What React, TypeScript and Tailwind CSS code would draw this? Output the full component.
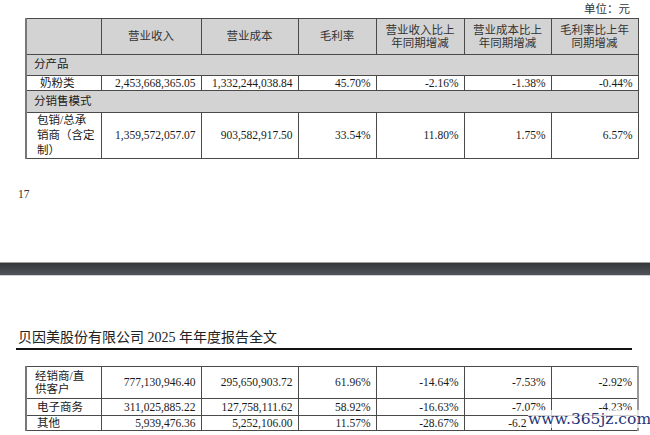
const font = { fontFamily: '"Liberation Serif", "Noto Sans CJK SC", serif' };

const cols = [75, 100, 97, 78, 88, 87, 87];

const Cols = () => (
  <colgroup>
    <col className="w-[75px]" />
    <col className="w-[100px]" />
    <col className="w-[97px]" />
    <col className="w-[78px]" />
    <col className="w-[88px]" />
    <col className="w-[87px]" />
    <col className="w-[87px]" />
  </colgroup>
);

const cell = "border border-[#4a4a4a] px-[5px] text-right align-middle";
const head = "border border-[#4a4a4a] px-[4px] text-center align-middle font-normal leading-[13px] text-[#333]";

interface RowProps {
  label: React.ReactNode;
  values: React.ReactNode[];
  h: string;
  indent?: boolean;
}

const DataRow = ({ label, values, h, indent }: RowProps) => (
  <tr className={h}>
    <td className={`border border-[#4a4a4a] text-left align-middle ${indent ? "pl-[13px]" : "pl-[8px]"}`}>{label}</td>
    {values.map((v, i) => (
      <td key={i} className={cell}>
        {v}
      </td>
    ))}
  </tr>
);

const SectionRow = ({ label, h }: { label: string; h: string }) => (
  <tr className={`${h} bg-[#d3d3d3]`}>
    <td colSpan={cols.length} className="border border-[#4a4a4a] pl-[7px] text-left align-middle">
      {label}
    </td>
  </tr>
);

export default function App() {
  return (
    <div className="relative w-[650px] h-[435px] overflow-hidden bg-white text-[11.5px] text-[#1a1a1a]" style={font}>
      <div className="h-[18px] pr-[20px] text-right leading-[18px] text-[#333]">单位：元</div>

      <table className="ml-[25px] w-[612px] table-fixed border-collapse border-l-2 border-l-[#777]">
        <Cols />
        <tbody>
          <tr className="h-[36px] bg-[#d3d3d3]">
            <th className={head}></th>
            <th className={head}>营业收入</th>
            <th className={head}>营业成本</th>
            <th className={head}>毛利率</th>
            <th className={head}>
              营业收入比上
              <br />
              年同期增减
            </th>
            <th className={head}>
              营业成本比上
              <br />
              年同期增减
            </th>
            <th className={head}>
              毛利率比上年
              <br />
              同期增减
            </th>
          </tr>
          <SectionRow label="分产品" h="h-[21px]" />
          <DataRow
            label="奶粉类"
            indent
            h="h-[15px] leading-[14px]"
            values={["2,453,668,365.05", "1,332,244,038.84", "45.70%", "-2.16%", "-1.38%", "-0.44%"]}
          />
          <SectionRow label="分销售模式" h="h-[22px]" />
          <DataRow
            label={
              <div className="leading-[15px] pl-[2px]">
                包销/总承
                <br />
                销商（含定
                <br />
                制）
              </div>
            }
            h="h-[45px]"
            values={["1,359,572,057.07", "903,582,917.50", "33.54%", "11.80%", "1.75%", "6.57%"]}
          />
        </tbody>
      </table>

      <div className="mt-[28px] h-[14px] pl-[18px] leading-[14px] text-[11.5px] text-[#333]">17</div>

      <div className="mt-[61px] h-[14px] border-t border-t-[#a0a0a0] border-b border-b-[#d0d0d0] bg-gradient-to-b from-[#35383b] to-[#50545a]"></div>

      <div className="mt-[52px] ml-[16px] w-[616px] border-b-2 border-b-[#111] pl-[2px] text-[14px] leading-[20px] text-[#222]">
        贝因美股份有限公司 2025 年年度报告全文
      </div>

      <table className="mt-[16px] ml-[25px] w-[613px] table-fixed border-collapse border-l-2 border-l-[#777] border-r-2 border-r-[#999]">
        <Cols />
        <tbody>
          <DataRow
            label={
              <div className="leading-[13px]">
                经销商/直
                <br />
                供客户
              </div>
            }
            h="h-[32px]"
            values={["777,130,946.40", "295,650,903.72", "61.96%", "-14.64%", "-7.53%", "-2.92%"]}
          />
          <DataRow
            label={<span className="pl-[2px]">电子商务</span>}
            h="h-[17px] leading-[15px]"
            values={["311,025,885.22", "127,758,111.62", "58.92%", "-16.63%", "-7.07%", "-4.23%"]}
          />
          <DataRow
            label={<span className="pl-[2px]">其他</span>}
            h="h-[15px] leading-[14px]"
            values={["5,939,476.36", "5,252,106.00", "11.57%", "-28.67%", <span className="mr-[19px]">-6.2</span>, ""]}
          />
        </tbody>
      </table>

      {/* watermark over the bottom-right corner */}
      <div
        className="absolute left-[528px] top-[410px] bg-white/75 text-[15.5px] leading-[18px] text-[#1f3579]"
        style={{ fontFamily: '"DejaVu Serif", serif' }}
      >
        www.365jz.com
      </div>
    </div>
  );
}
